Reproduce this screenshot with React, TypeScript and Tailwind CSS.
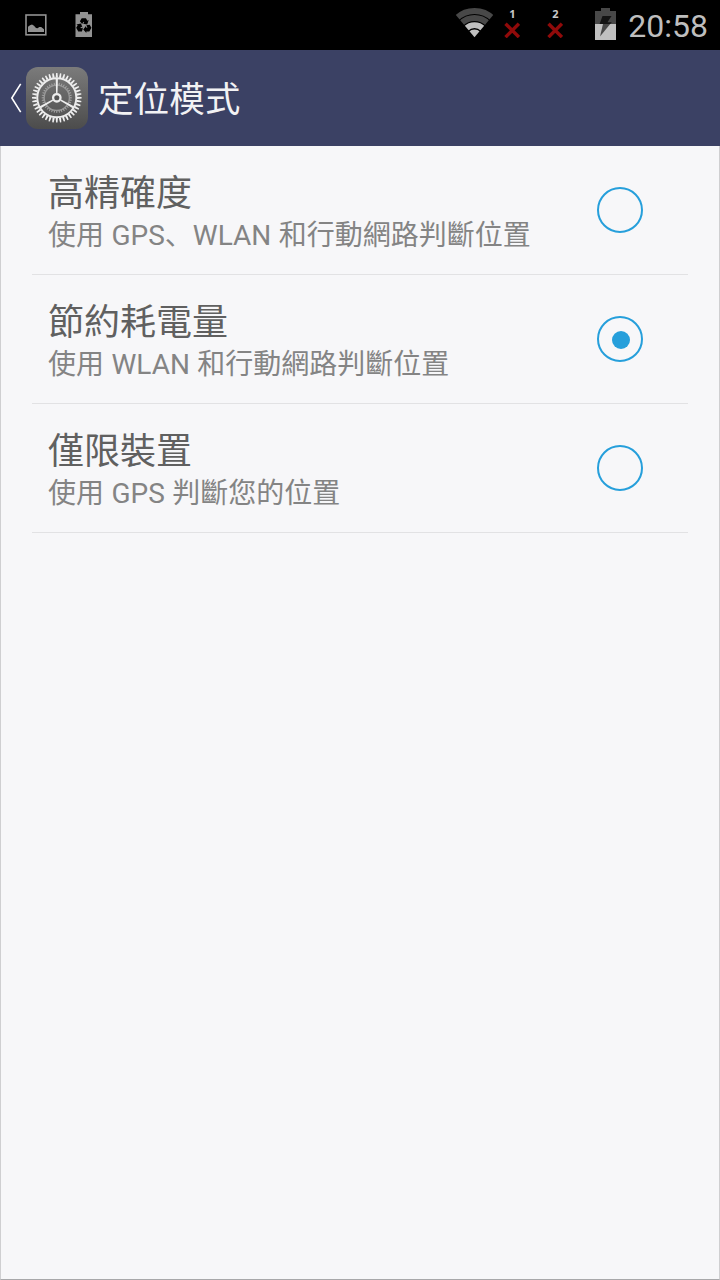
import React, { useState } from 'react';

const modes = [
  { id: 'high', title: '高精確度', summary: '使用 GPS、WLAN 和行動網路判斷位置' },
  { id: 'battery', title: '節約耗電量', summary: '使用 WLAN 和行動網路判斷位置' },
  { id: 'device', title: '僅限裝置', summary: '使用 GPS 判斷您的位置' },
];

const outerTeeth = Array.from({ length: 40 }, (_, i) => i * 9);
const innerTeeth = Array.from({ length: 36 }, (_, i) => i * 10);

function PictureIcon() {
  return (
    <svg width="22" height="22" viewBox="0 0 22 22">
      <rect x="1" y="1" width="19.8" height="19.8" fill="none" stroke="#929292" strokeWidth="1.6" />
      <path d="M3 18v-5.2l2-1.6 2-.7 2 1.2 2 2.2 1.6.4 1.7-1.3h1.8l2.9 2.2V18z" fill="#929292" />
    </svg>
  );
}

function BatterySaverIcon() {
  return (
    <svg width="18" height="26" viewBox="0 0 18 26">
      <path d="M5 0h8v2.3h4V25H.5V2.3H5z" fill="#929292" />
      <g fill="#000">
        {[0, 120, 240].map(a => (
          <g key={a} transform={`rotate(${a} 8.8 13.8)`}>
            <path d="M4.9 9.3 6.7 6.2h4.2l1.5 2.6 1.3-.8-1.5 4.5-4.3-.7 1.3-.8-.6-1.3-1.5 2.2z" />
          </g>
        ))}
      </g>
    </svg>
  );
}

function WifiIcon() {
  return (
    <svg width="40" height="31" viewBox="0 0 40 31">
      <defs>
        <clipPath id="wedge">
          <path d="M19.5 30.2-.5 6.4V0h40v6.4z" />
        </clipPath>
      </defs>
      <g clipPath="url(#wedge)" fill="none" strokeWidth="5.8">
        <circle cx="19.5" cy="30.2" r="26.2" stroke="#484848" />
        <circle cx="19.5" cy="30.2" r="19.2" stroke="#484848" />
        <circle cx="19.5" cy="30.2" r="12.1" stroke="#c0c0c0" />
        <circle cx="19.5" cy="30.2" r="7.8" fill="#c0c0c0" stroke="none" />
      </g>
    </svg>
  );
}

function NoSim({ slot }: { slot: number }) {
  return (
    <div className="flex w-4 flex-col items-center">
      <span className="h-[13px] font-['Noto_Sans'] text-[11px] font-bold leading-[9px] text-[#c8c8c8]">{slot}</span>
      <svg width="16" height="16" viewBox="0 0 16 16">
        <path d="M1.5 1.7 14.9 15.1M14.9 1.7 1.5 15.1" stroke="#900a0a" strokeWidth="3.4" />
      </svg>
    </div>
  );
}

function BatteryIcon() {
  return (
    <svg width="21" height="32" viewBox="0 0 21 32">
      <path d="M6 0h9v3h6v13H0V3h6z" fill="#484848" />
      <path d="M0 16h21v16H0z" fill="#c0c0c0" />
      <path d="M7.5 8h9l-4 6.3h4.3L15.2 16H4.6z" fill="#141414" />
      <path d="M8 16h7.2L5 28.4z" fill="#484848" />
    </svg>
  );
}

function SettingsIcon() {
  return (
    <svg width="62" height="62" viewBox="0 0 62 62">
      <defs>
        <linearGradient id="tile" x1="0" y1="0" x2="0" y2="1">
          <stop offset="0" stopColor="#7b7b7b" />
          <stop offset="1" stopColor="#4c4c4c" />
        </linearGradient>
      </defs>
      <rect width="62" height="62" rx="12" fill="url(#tile)" />
      <g transform="translate(30.8 30.8)">
        <g fill="#a4a4a4">
          {innerTeeth.map(a => (
            <path key={a} d="M-.7-12.8-.4-15.2H.4L.7-12.8z" transform={`rotate(${a})`} />
          ))}
        </g>
        <circle r="12.6" fill="none" stroke="#999" strokeWidth="1.3" />
        <g fill="#f0f0f0">
          {outerTeeth.map(a => (
            <path key={a} d="M-1.1-20.2-.7-24.8H.7L1.1-20.2z" transform={`rotate(${a})`} />
          ))}
        </g>
        <circle r="19.5" fill="none" stroke="#ececec" strokeWidth="1.9" />
        {[0, 120, 240].map(a => (
          <path key={a} d="M-.7-4.5-1.1-19h2.2L.7-4.5z" fill="#eee" transform={`rotate(${a})`} />
        ))}
        <circle r="3.7" fill="#555" stroke="#ededed" strokeWidth="2.3" />
      </g>
    </svg>
  );
}

function StatusBar() {
  return (
    <div className="flex h-[50px] items-start bg-black">
      <div className="flex items-start pl-[25px] pt-[12px]">
        <div className="pt-[2px]"><PictureIcon /></div>
        <div className="ml-7"><BatterySaverIcon /></div>
      </div>
      <div className="ml-auto flex items-start pr-3 pt-[7px]">
        <WifiIcon />
        <div className="ml-[9px] flex gap-[27px] pt-[2px]">
          <NoSim slot={1} />
          <NoSim slot={2} />
        </div>
        <div className="ml-8 pt-[1px]"><BatteryIcon /></div>
        <span className="ml-[12px] text-[32px] leading-[38px] text-[#bebebe]">20:58</span>
      </div>
    </div>
  );
}

export default function LocationModePage() {
  const [selected, setSelected] = useState('battery');

  return (
    <div lang="zh-Hans" className="flex h-[1280px] w-[720px] flex-col overflow-hidden bg-[#f7f7f9] font-[Roboto,'Noto_Sans_CJK_SC',sans-serif]">
      <StatusBar />

      {/* Header */}
      <header className="flex h-24 items-center bg-[#3b4164] pl-[10px]">
        <svg width="12" height="30" viewBox="0 0 12 30">
          <path d="M10.7.8 1.8 15l8.9 14.2" fill="none" stroke="#fff" strokeWidth="1.6" />
        </svg>
        <div className="ml-1"><SettingsIcon /></div>
        <h1 className="ml-[10px] pt-1 text-[35.6px] leading-[48px] text-[#f2f2f4]">定位模式</h1>
      </header>

      {/* Options */}
      <main className="flex-1 border-x border-b border-x-[#cfcfd1] border-b-[#a8a8aa] px-[31px]">
        {modes.map(mode => (
          <button
            key={mode.id}
            onClick={() => setSelected(mode.id)}
            className="flex h-[129px] w-full items-center justify-between border-b border-[#e2e2e4] pl-4 pr-[45px] text-left"
          >
            <div className="flex flex-col whitespace-nowrap pt-[8px]">
              <span className="text-[36px] leading-[44px] text-[#606060]">{mode.title}</span>
              <span className="text-[28px] leading-[40px] text-[#848484] [word-spacing:0.5px]">{mode.summary}</span>
            </div>
            <span className="flex h-[46px] w-[46px] items-center justify-center rounded-full border-2 border-[#269fdb]">
              {selected === mode.id && <span className="ml-[1px] mt-[1px] h-[18px] w-[18px] rounded-full bg-[#269fdb]" />}
            </span>
          </button>
        ))}
      </main>
    </div>
  );
}
